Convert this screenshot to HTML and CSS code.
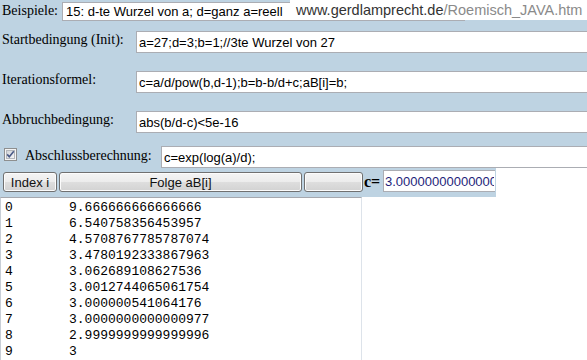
FILE: index.html
```html
<!DOCTYPE html>
<html>
<head>
    <title>Iteration</title>
    <meta charset="utf-8">
    <link rel="stylesheet" href="styles.css">
</head>
<body>
    <div class="panel">
        <div class="row row-first">
            <label class="lbl lbl-short">Beispiele:</label>
            <select class="auswahl">
                <option>15: d-te Wurzel von a; d=ganz a=reell</option>
            </select>
            <div class="url"><span class="host">www.gerdlamprecht.de</span>/Roemisch_JAVA.htm</div>
        </div>
        <div class="row row-init">
            <label class="lbl lbl-wide">Startbedingung (Init):</label>
            <input type="text" class="feld" value="a=27;d=3;b=1;//3te Wurzel von 27">
        </div>
        <div class="row row-iter">
            <label class="lbl lbl-wide">Iterationsformel:</label>
            <input type="text" class="feld" value="c=a/d/pow(b,d-1);b=b-b/d+c;aB[i]=b;">
        </div>
        <div class="row row-iter">
            <label class="lbl lbl-wide">Abbruchbedingung:</label>
            <input type="text" class="feld" value="abs(b/d-c)<5e-16">
        </div>
        <div class="row row-end">
            <span class="check">
                <svg width="13" height="13" viewBox="0 0 13 13">
                    <defs>
                        <linearGradient id="cb" x1="0" y1="0" x2="1" y2="1">
                            <stop offset="0" stop-color="#cfd3d8"/>
                            <stop offset="1" stop-color="#f7f7f7"/>
                        </linearGradient>
                    </defs>
                    <rect x="0.5" y="0.5" width="12" height="12" fill="#f4f4f4" stroke="#8e8f8f"/>
                    <rect x="2.5" y="2.5" width="8" height="8" fill="url(#cb)" stroke="#b5b8bc"/>
                    <path d="M3.2 6.4 L5.3 8.8 L9.8 3.2" fill="none" stroke="#4a5a86" stroke-width="1.6"/>
                </svg>
            </span>
            <label class="lbl lbl-end">Abschlussberechnung:</label>
            <input type="text" class="feld" value="c=exp(log(a)/d);">
        </div>
    </div>
    <div class="leiste">
        <button class="knopf k-index">Index i</button>
        <button class="knopf k-folge">Folge aB[i]</button>
        <button class="knopf k-leer"></button>
        <b class="c-lbl">c=</b>
        <input type="text" class="feld c-feld" value="3.00000000000000">
    </div>
    <textarea class="ausgabe" readonly>0	9.666666666666666
1	6.540758356453957
2	4.5708767785787074
3	3.4780192333867963
4	3.062689108627536
5	3.0012744065061754
6	3.000000541064176
7	3.0000000000000977
8	2.9999999999999996
9	3</textarea>
</body>
</html>
```

FILE: styles.css
```css
*{
    padding: 0;
    margin: 0;
    box-sizing: border-box;
}
html, body{
    overflow: hidden;
    height: 100%;
}
body{
    background: #ffffff;
    font-family: "Liberation Serif", "Times New Roman", serif;
    font-size: 14px;
    color: #000000;
}
.panel{
    background: #bed3e2;
}
.row{
    display: flex;
    align-items: flex-start;
}
.row-first{
    position: relative;
    padding-top: 2px;
    height: 21px;
}
.row-init{
    margin-top: 10px;
}
.row-iter{
    margin-top: 18px;
}
.row-end{
    margin-top: 13px;
}
.lbl{
    display: block;
    line-height: 16px;
    margin-top: 1px;
    padding-left: 2px;
    white-space: nowrap;
    flex-shrink: 0;
}
.lbl-short{
    width: 62px;
}
.lbl-wide{
    width: 136px;
}
.lbl-end{
    width: 136px;
    padding-left: 0;
    margin-top: 2px;
}
.check{
    display: block;
    width: 13px;
    height: 13px;
    margin: 2px 8px 0 4px;
    flex-shrink: 0;
}
.check svg{
    display: block;
}
.auswahl{
    appearance: none;
    -webkit-appearance: none;
    width: 403px;
    height: 19px;
    border: 1px solid #abadb3;
    border-radius: 0;
    background: #ffffff;
    font-family: "Liberation Sans", Arial, sans-serif;
    font-size: 13px;
    padding: 0 3px;
    color: #000000;
    flex-shrink: 0;
}
.url{
    position: absolute;
    top: 0;
    left: 290px;
    right: 0;
    height: 20px;
    background: #ffffff;
    padding: 1px 0 0 6px;
    line-height: 19px;
    font-family: "Liberation Sans", Arial, sans-serif;
    font-size: 14.5px;
    color: #8a8a8a;
    white-space: nowrap;
}
.host{
    color: #333333;
}
.feld{
    height: 22px;
    width: 520px;
    border: 1px solid #abadb3;
    background: #ffffff;
    font-family: "Liberation Sans", Arial, sans-serif;
    font-size: 13px;
    padding: 0 2px;
    color: #000000;
    flex-shrink: 0;
    outline: none;
}
.leiste{
    display: flex;
    align-items: flex-start;
    width: 496px;
    height: 29px;
    background: #bed3e2;
    padding: 2px 0 0 3px;
}
.knopf{
    height: 20px;
    margin-top: 2px;
    margin-right: 2px;
    border: 1px solid #707070;
    border-radius: 3px;
    background: linear-gradient(#f4f4f4 0%, #ececec 50%, #dedede 51%, #d2d2d2 100%);
    box-shadow: inset 0 0 0 1px #fcfcfc;
    font-family: "Liberation Sans", Arial, sans-serif;
    font-size: 13px;
    color: #111111;
    flex-shrink: 0;
}
.k-index{
    width: 54px;
}
.k-folge{
    width: 243px;
}
.k-leer{
    width: 59px;
    margin-right: 0;
}
.c-lbl{
    display: block;
    width: 20px;
    padding-left: 1px;
    margin-top: 3px;
    font-size: 16px;
    line-height: 18px;
}
.c-feld{
    width: 112px;
    border-right: 0;
    color: #1e1e7a;
    padding: 0 1px;
}
.ausgabe{
    display: block;
    width: 362px;
    height: 180px;
    border: 1px solid #dde3ea;
    border-top-color: #a5a7ad;
    border-left-color: #c8ced6;
    padding: 2px 4px;
    font-family: "Liberation Mono", "Courier New", monospace;
    font-size: 13px;
    line-height: 16px;
    tab-size: 64px;
    -moz-tab-size: 64px;
    resize: none;
    overflow: hidden;
    outline: none;
    color: #000000;
    background: #ffffff;
}
```
